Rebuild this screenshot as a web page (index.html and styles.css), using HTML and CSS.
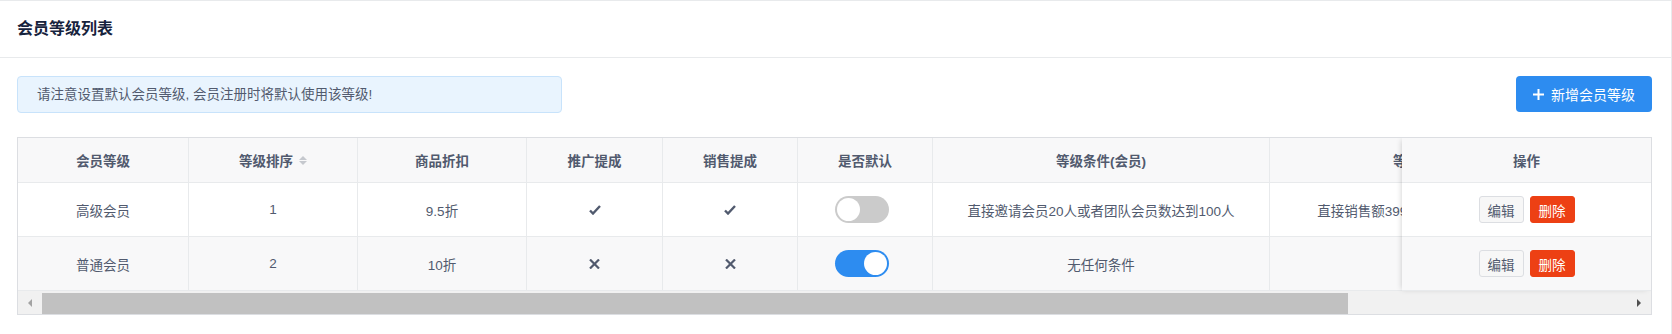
FILE: index.html
```html
<!DOCTYPE html>
<html>
  <head>
    <meta charset="utf-8">
    <title>会员等级列表</title>
    <link rel="stylesheet" href="styles.css">
  </head>
  <body>
    <div class="card">
      <div class="card-head">会员等级列表</div>

      <div class="card-body">
        <div class="toolbar">
          <div class="alert">请注意设置默认会员等级, 会员注册时将默认使用该等级!</div>
          <button class="btn-primary">
            <svg width="11" height="11" viewBox="0 0 11 11">
              <path d="M5.5 0v11M0 5.5h11" stroke="#fff" stroke-width="2" />
            </svg>
            新增会员等级
          </button>
        </div>

        <div class="table">
          <!-- scrolling part, clipped where the fixed column starts -->
          <div class="table-scroll">
            <div class="row head">
              <div class="cell">会员等级</div>
              <div class="cell">等级排序
                <span class="sort">
                  <i class="up"></i>
                  <i class="down"></i>
                </span>
              </div>
              <div class="cell">商品折扣</div>
              <div class="cell">推广提成</div>
              <div class="cell">销售提成</div>
              <div class="cell">是否默认</div>
              <div class="cell">等级条件(会员)</div>
              <div class="cell">等级条件(销售)</div>
            </div>

            <div class="row">
              <div class="cell">高级会员</div>
              <div class="cell">1</div>
              <div class="cell">9.5折</div>
              <div class="cell">
                <svg width="12" height="10" viewBox="0 0 12 10">
                  <path d="M1 5.5l3 3L11 1" fill="none" stroke="#515a6e" stroke-width="2.4" />
                </svg>
              </div>
              <div class="cell">
                <svg width="12" height="10" viewBox="0 0 12 10">
                  <path d="M1 5.5l3 3L11 1" fill="none" stroke="#515a6e" stroke-width="2.4" />
                </svg>
              </div>
              <div class="cell"><span class="switch"></span></div>
              <div class="cell">直接邀请会员20人或者团队会员数达到100人</div>
              <div class="cell">直接销售额3999元或者团队销售额999元</div>
            </div>

            <div class="row stripe">
              <div class="cell">普通会员</div>
              <div class="cell">2</div>
              <div class="cell">10折</div>
              <div class="cell">
                <svg width="11" height="10" viewBox="0 0 11 10">
                  <path d="M1 0.5l9 9M10 0.5l-9 9" stroke="#515a6e" stroke-width="2.2" />
                </svg>
              </div>
              <div class="cell">
                <svg width="11" height="10" viewBox="0 0 11 10">
                  <path d="M1 0.5l9 9M10 0.5l-9 9" stroke="#515a6e" stroke-width="2.2" />
                </svg>
              </div>
              <div class="cell"><span class="switch on"></span></div>
              <div class="cell">无任何条件</div>
              <div class="cell"></div>
            </div>
          </div>

          <!-- fixed right column -->
          <div class="table-fixed">
            <div class="frow head">操作</div>
            <div class="frow">
              <button class="btn-small">编辑</button>
              <button class="btn-small danger">删除</button>
            </div>
            <div class="frow stripe">
              <button class="btn-small">编辑</button>
              <button class="btn-small danger">删除</button>
            </div>
          </div>

          <div class="scrollbar">
            <span class="arrow left"></span>
            <span class="thumb"></span>
            <span class="arrow right"></span>
          </div>
        </div>
      </div>
    </div>
  </body>
</html>
```

FILE: styles.css
```css
:root {
  --primary: #2d8cf0;
  --danger: #ed4014;
  --text: #515a6e;
  --title: #17233d;
  --border: #e8eaec;
  --table-border: #dcdee2;
  --stripe: #f8f8f9;
}

html,
body {
  margin: 0;
  padding: 0;
  background: #fff;
}

body {
  font-family: "Liberation Sans", "Noto Sans CJK SC", sans-serif;
  font-size: 13.5px;
  color: var(--text);
}

.card {
  min-height: 334px;
  box-sizing: border-box;
  border-top: 1px solid var(--border);
  border-right: 1px solid var(--border);
}

.card-head {
  height: 56px;
  line-height: 56px;
  padding-left: 17px;
  font-size: 16px;
  font-weight: 700;
  color: var(--title);
  border-bottom: 1px solid var(--border);
}

.card-body {
  padding: 18px 19px 0 17px;
}

.toolbar {
  display: flex;
  justify-content: space-between;
  align-items: flex-start;
}

.alert {
  width: 545px;
  height: 37px;
  box-sizing: border-box;
  padding-left: 19px;
  line-height: 35px;
  background: #e9f4fe;
  border: 1px solid #c8e3fb;
  border-radius: 4px;
}

.btn-primary {
  display: flex;
  align-items: center;
  justify-content: center;
  gap: 7px;
  width: 136px;
  height: 36px;
  border: none;
  border-radius: 4px;
  background: var(--primary);
  color: #fff;
  font-family: inherit;
  font-size: 14px;
  cursor: pointer;
}

/* table */
.table {
  position: relative;
  margin-top: 24px;
  border: 1px solid var(--table-border);
  overflow: hidden;
}

.table-scroll {
  margin-right: 249px;
  overflow: hidden;
}

.row {
  display: grid;
  grid-template-columns: 171px 169px 169px 136px 135px 135px 337px 337px;
  width: 1589px;
  height: 54px;
  box-sizing: border-box;
  border-bottom: 1px solid var(--border);
}

.row.head {
  height: 45px;
  background: var(--stripe);
  font-weight: 700;
}

.row.stripe {
  background: var(--stripe);
}

.cell {
  display: flex;
  align-items: center;
  justify-content: center;
  gap: 6px;
  white-space: nowrap;
  border-right: 1px solid var(--border);
}

.sort {
  display: flex;
  flex-direction: column;
  gap: 1px;
}

.sort i {
  width: 0;
  height: 0;
  border-left: 4px solid transparent;
  border-right: 4px solid transparent;
}

.sort .up {
  border-bottom: 4px solid #c5c8ce;
}

.sort .down {
  border-top: 4px solid #c5c8ce;
}

.switch {
  position: relative;
  display: inline-block;
  width: 54px;
  height: 27px;
  margin-left: -6px;
  border-radius: 14px;
  background: #cbcbcb;
}

.switch:before {
  content: "";
  position: absolute;
  top: 2px;
  left: 2px;
  width: 23px;
  height: 23px;
  border-radius: 50%;
  background: #fff;
}

.switch.on {
  background: var(--primary);
}

.switch.on:before {
  left: 29px;
}

/* fixed column laid over the scrolling part */
.table-fixed {
  position: absolute;
  top: 0;
  right: 0;
  width: 249px;
  background: #fff;
  box-shadow: -2px 0 6px -2px rgba(0, 0, 0, 0.2);
}

.frow {
  display: flex;
  align-items: center;
  justify-content: center;
  gap: 6px;
  height: 54px;
  box-sizing: border-box;
  border-bottom: 1px solid var(--border);
}

.frow.head {
  height: 45px;
  background: var(--stripe);
  font-weight: 700;
}

.frow.stripe {
  background: var(--stripe);
}

.btn-small {
  width: 45px;
  height: 27px;
  padding: 0;
  border: 1px solid var(--table-border);
  border-radius: 3px;
  background: #f7f7f7;
  color: var(--text);
  font-family: inherit;
  font-size: 13.5px;
}

.btn-small.danger {
  border-color: var(--danger);
  background: var(--danger);
  color: #fff;
}

/* horizontal scrollbar */
.scrollbar {
  display: flex;
  align-items: center;
  height: 23px;
  background: #f1f1f1;
}

.arrow {
  width: 0;
  height: 0;
  border-top: 4px solid transparent;
  border-bottom: 4px solid transparent;
}

.arrow.left {
  margin: 0 10px 0 10px;
  border-right: 4px solid #a3a3a3;
}

.arrow.right {
  margin-left: auto;
  margin-right: 10px;
  border-left: 4px solid #505050;
}

.thumb {
  align-self: flex-end;
  width: 1306px;
  height: 21px;
  background: #c1c1c1;
}
```
